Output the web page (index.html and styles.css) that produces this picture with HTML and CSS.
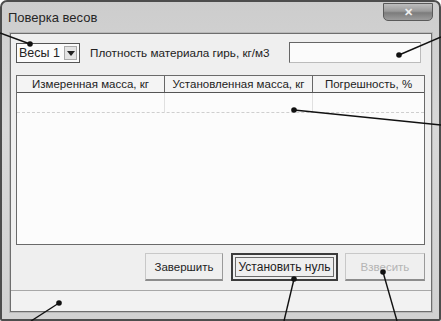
FILE: index.html
```html
<!DOCTYPE html>
<html lang="ru">
<head>
    <meta charset="UTF-8">
    <title>Поверка весов</title>
    <link rel="stylesheet" href="styles.css">
</head>
<body>
    <div class="window">
        <div class="titlebar">
            <span class="title">Поверка весов</span>
            <span class="close-btn">✕</span>
        </div>

        <div class="client">
            <div class="toolbar">
                <div class="combo">
                    <span class="combo-value">Весы 1</span>
                    <span class="combo-arrow"></span>
                </div>
                <span class="field-label">Плотность материала гирь, кг/м3</span>
                <div class="text-field"></div>
            </div>

            <div class="list">
                <div class="list-head">
                    <div class="col col-1">Измеренная масса, кг</div>
                    <div class="col col-2">Установленная масса, кг</div>
                    <div class="col col-3">Погрешность, %</div>
                </div>
                <div class="list-row">
                    <div class="col col-1"></div>
                    <div class="col col-2"></div>
                    <div class="col col-3"></div>
                </div>
            </div>

            <div class="buttons">
                <button class="btn btn-finish">Завершить</button>
                <button class="btn btn-default">Установить нуль</button>
                <button class="btn btn-weigh" disabled>Взвесить</button>
            </div>

            <div class="statusbar"></div>
        </div>
    </div>

    <!-- callout lines of the manual page -->
    <svg class="callouts" width="441" height="321" viewBox="0 0 441 321">
        <g stroke="#111" stroke-width="1.4" fill="none">
            <line x1="0" y1="33" x2="30" y2="44"/>
            <line x1="441" y1="37" x2="399" y2="55"/>
            <line x1="294" y1="110" x2="441" y2="125"/>
            <line x1="59" y1="303" x2="31" y2="321"/>
            <line x1="294" y1="279" x2="284" y2="321"/>
            <line x1="383" y1="272" x2="397" y2="321"/>
        </g>
        <g fill="#111">
            <circle cx="30" cy="44" r="2.8"/>
            <circle cx="399" cy="55" r="2.8"/>
            <circle cx="294" cy="110" r="2.8"/>
            <circle cx="59" cy="303" r="2.8"/>
            <circle cx="294" cy="279" r="2.8"/>
            <circle cx="383" cy="272" r="2.8"/>
        </g>
    </svg>
</body>
</html>
```

FILE: styles.css
```css
* { margin: 0; padding: 0; box-sizing: border-box; }
body {
    font-family: "Liberation Sans", Arial, sans-serif;
    font-size: 11px;
    color: #222;
    background: #fff;
    width: 441px;
    height: 321px;
    overflow: hidden;
}
.window {
    width: 441px;
    height: 321px;
    background: linear-gradient(180deg, #cdcdcd 0%, #d8d8d8 40%, #d2d2d2 100%);
    border: 2px solid #4d4d4d;
    border-radius: 7px 7px 2px 2px;
    display: flex;
    flex-direction: column;
}
.titlebar {
    height: 31px;
    display: flex;
    justify-content: space-between;
    align-items: flex-start;
    padding: 0 6px 0 6px;
}
.title {
    font-size: 13px;
    padding-top: 8px;
    color: #262626;
}
.close-btn {
    width: 50px;
    height: 18px;
    margin-top: 1px;
    border: 1px solid #5a5a5a;
    border-radius: 0 0 5px 5px;
    background: linear-gradient(180deg, #bdbdbd 0%, #9a9a9a 45%, #7c7c7c 55%, #9c9c9c 100%);
    color: #efefef;
    font-size: 11px;
    font-weight: bold;
    text-align: center;
    line-height: 16px;
}
.client {
    margin: 0 7px 0 8px;
    height: 279px;
    background: #efefef;
    border: 1px solid #6e6e6e;
    box-shadow: 0 0 0 1px #b9b9b9;
    display: flex;
    flex-direction: column;
}
.toolbar {
    display: flex;
    align-items: center;
    padding: 8px 10px 0 5px;
    height: 29px;
}
.combo {
    width: 64px;
    height: 20px;
    display: flex;
    align-items: center;
    justify-content: space-between;
    border: 1px solid #555;
    background: #fbfbfb;
    padding: 0 2px 0 2px;
}
.combo-value { font-size: 12.5px; }
.combo-arrow {
    width: 13px;
    height: 14px;
    background: #e4e4e4;
    border: 1px solid #aaa;
    position: relative;
}
.combo-arrow::after {
    content: "";
    position: absolute;
    left: 2px;
    top: 4px;
    border-left: 4px solid transparent;
    border-right: 4px solid transparent;
    border-top: 5px solid #222;
}
.field-label {
    margin-left: 10px;
    font-size: 11.7px;
    white-space: nowrap;
}
.text-field {
    margin-left: auto;
    width: 132px;
    height: 21px;
    border: 1px solid #666;
    border-right-color: #bbb;
    border-bottom-color: #bbb;
    background: #fbfbfb;
}
.list {
    margin: 12px 6px 0 5px;
    height: 170px;
    border: 1px solid #6a6a6a;
    background: #fcfcfc;
}
.list-head, .list-row { display: flex; }
.list-head {
    height: 17px;
    border-bottom: 1px solid #555;
    background: #f4f4f4;
}
.list-head .col {
    text-align: center;
    line-height: 16px;
    font-size: 11.5px;
    border-right: 1px solid #666;
    white-space: nowrap;
}
.list-row {
    height: 20px;
    border-bottom: 1px dashed #cfcfcf;
}
.list-row .col { border-right: 1px solid #e0e0e0; }
.col-1 { width: 148px; }
.col-2 { width: 148px; }
.col-3 { flex: 1; border-right: none !important; }
.buttons {
    display: flex;
    justify-content: flex-end;
    gap: 8px;
    margin-top: 8px;
    padding-right: 6px;
}
.btn {
    font-family: inherit;
    font-size: 11.5px;
    height: 28px;
    color: #1e1e1e;
    background: #efefef;
    border: 1px solid #c8c8c8;
    border-bottom: 2px solid #8c8c8c;
    border-right: 1px solid #9a9a9a;
}
.btn-finish { width: 78px; }
.btn-default {
    width: 107px;
    border: 2px solid #3c3c3c;
    outline: 1px solid #6a6a6a;
    outline-offset: -5px;
    font-size: 12px;
}
.btn-weigh {
    width: 80px;
    margin-left: -1px;
    color: #b4b4b4;
}
.statusbar {
    margin-top: 9px;
    flex: 1;
    border-top: 1px solid #a8a8a8;
    background: #f2f2f2;
}
.callouts {
    position: absolute;
    left: 0;
    top: 0;
}
```
